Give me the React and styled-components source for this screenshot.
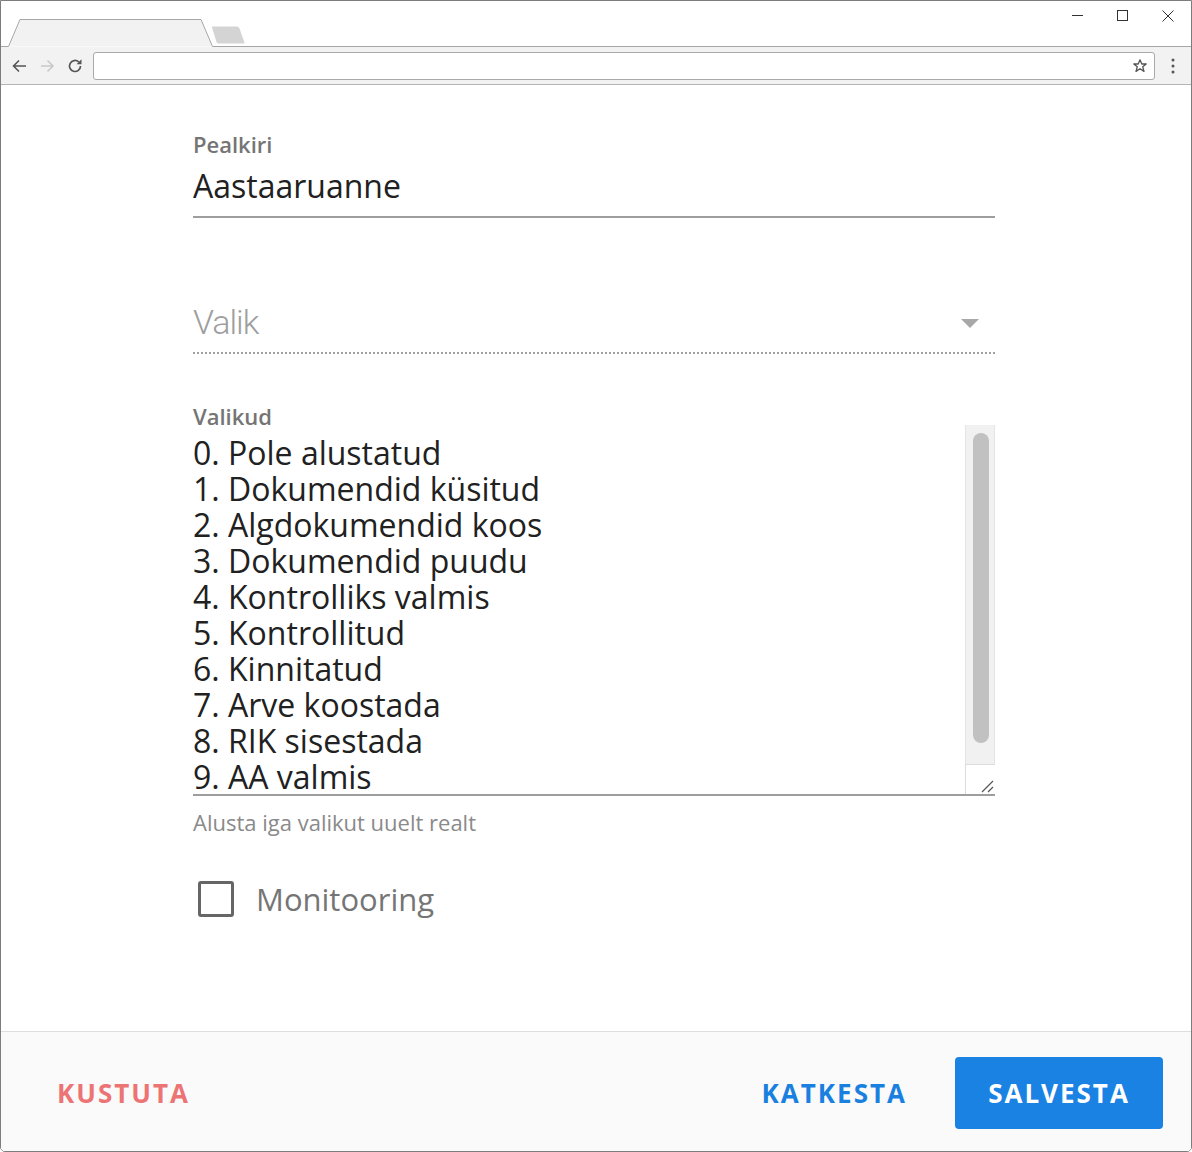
import styled, { createGlobalStyle } from 'styled-components';

const GlobalStyle = createGlobalStyle`
  html, body {
    margin: 0;
    padding: 0;
    background: #ffffff;
  }
  * {
    box-sizing: border-box;
  }
`;

const choices = [
  '0. Pole alustatud',
  '1. Dokumendid küsitud',
  '2. Algdokumendid koos',
  '3. Dokumendid puudu',
  '4. Kontrolliks valmis',
  '5. Kontrollitud',
  '6. Kinnitatud',
  '7. Arve koostada',
  '8. RIK sisestada',
  '9. AA valmis',
];

// browser chrome (tabs + toolbar)
const TabStrip = () => (
  <svg width="250" height="46" viewBox="0 0 250 46">
    <path d="M0 45.5H7.5L19 18.5H200L211.5 45.5H250" fill="#f2f2f2" stroke="#a6a6a6" strokeWidth="1" />
    <rect x="0" y="46" width="250" height="1" fill="#f2f2f2" />
    <path d="M211 26.5Q210 25.5 212 25.5H236Q237.5 25.5 238.3 27L243.5 41.5Q244 42.5 242.5 42.5H217.5Q216 42.5 215.5 41Z" fill="#d4d4d4" />
  </svg>
);

const WindowButtons = () => (
  <svg width="130" height="30" viewBox="0 0 130 30">
    <path d="M12 14.5H23" stroke="#333" strokeWidth="1" />
    <rect x="57.5" y="9.5" width="10" height="10" fill="none" stroke="#333" strokeWidth="1" />
    <path d="M102.5 9.5L113.5 20.5M113.5 9.5L102.5 20.5" stroke="#333" strokeWidth="1" />
  </svg>
);

const NavIcons = () => (
  <svg width="84" height="20" viewBox="0 0 84 20">
    <path d="M25 10H13M18 4.5L12.5 10L18 15.5" fill="none" stroke="#555" strokeWidth="1.6" />
    <path d="M40 10H52M46.5 4.5L52 10L46.5 15.5" fill="none" stroke="#c9c9c9" strokeWidth="1.6" />
    <path d="M79.5 10A5.5 5.5 0 1 1 77.8 6" fill="none" stroke="#555" strokeWidth="1.7" />
    <path d="M80.5 3.2V8.2H75.5Z" fill="#555" />
  </svg>
);

const StarIcon = () => (
  <svg width="16" height="16" viewBox="0 0 16 16">
    <path
      d="M8 1.8L9.8 6H14.2L10.7 8.8L12 13.4L8 10.7L4 13.4L5.3 8.8L1.8 6H6.2Z"
      fill="none"
      stroke="#555"
      strokeWidth="1.3"
      strokeLinejoin="round"
    />
  </svg>
);

const MenuDots = () => (
  <svg width="6" height="18" viewBox="0 0 6 18">
    <circle cx="3" cy="3" r="1.5" fill="#555" />
    <circle cx="3" cy="9" r="1.5" fill="#555" />
    <circle cx="3" cy="15" r="1.5" fill="#555" />
  </svg>
);

const ResizeGrip = () => (
  <svg width="14" height="14" viewBox="0 0 14 14">
    <path d="M13 2L2 13M13 8L8 13" stroke="#555" strokeWidth="1.2" />
  </svg>
);

const App = () => {
  return (
    <>
      <GlobalStyle />
      <Window>
        <TitleBar>
          <TabStrip />
          <TitleFill>
            <WindowButtons />
          </TitleFill>
        </TitleBar>
        <Toolbar>
          <NavIcons />
          <Omnibox>
            <StarIcon />
          </Omnibox>
          <MenuButton>
            <MenuDots />
          </MenuButton>
        </Toolbar>

        <Page>
          <Form>
            <Label>Pealkiri</Label>
            <TextInput type="text" value="Aastaaruanne" readOnly />

            <SelectField>
              <Placeholder>Valik</Placeholder>
              <Caret />
            </SelectField>

            <Label $tight>Valikud</Label>
            <TextareaBox>
              <Textarea value={choices.join('\n')} readOnly />
              <ScrollColumn>
                <ScrollTrack>
                  <ScrollThumb />
                </ScrollTrack>
                <Resizer>
                  <ResizeGrip />
                </Resizer>
              </ScrollColumn>
            </TextareaBox>
            <Hint>Alusta iga valikut uuelt realt</Hint>

            <CheckRow>
              <CheckBox />
              <CheckLabel>Monitooring</CheckLabel>
            </CheckRow>
          </Form>
        </Page>

        <Footer>
          <TextButton $color="#ec7474">KUSTUTA</TextButton>
          <FooterRight>
            <TextButton $color="#1a80e0">KATKESTA</TextButton>
            <PrimaryButton>SALVESTA</PrimaryButton>
          </FooterRight>
        </Footer>
      </Window>
    </>
  );
};

export default App;

const Window = styled.div`
  width: 1192px;
  height: 1152px;
  border: 1px solid #7d7d7d;
  border-radius: 0 0 5px 5px;
  overflow: hidden;
  display: flex;
  flex-direction: column;
  background: #ffffff;
  font-family: 'Open Sans', 'Noto Sans', sans-serif;
`;

const TitleBar = styled.div`
  height: 46px;
  display: flex;
  background: #ffffff;

  svg {
    display: block;
    flex-shrink: 0;
  }
`;

const TitleFill = styled.div`
  flex: 1;
  display: flex;
  justify-content: flex-end;
  align-items: flex-start;
  border-bottom: 1px solid #a6a6a6;
  padding-right: 1px;
`;

const Toolbar = styled.div`
  height: 38px;
  display: flex;
  align-items: center;
  background: #f2f2f2;
  border-bottom: 1px solid #b4b4b4;

  & > svg {
    flex-shrink: 0;
    margin-right: 8px;
  }
`;

const Omnibox = styled.div`
  flex: 1;
  height: 28px;
  background: #ffffff;
  border: 1px solid #a9a9a9;
  border-radius: 3px;
  display: flex;
  align-items: center;
  justify-content: flex-end;
  padding-right: 6px;

  svg {
    display: block;
  }
`;

const MenuButton = styled.div`
  width: 36px;
  display: flex;
  justify-content: center;

  svg {
    display: block;
  }
`;

const Page = styled.main`
  flex: 1;
  background: #ffffff;
`;

const Form = styled.div`
  width: 802px;
  margin-left: 192px;
  padding-top: 45px;
  display: flex;
  flex-direction: column;
`;

const Label = styled.div`
  font-size: 22px;
  font-weight: 600;
  line-height: ${(props) => (props.$tight ? '22px' : '28px')};
  color: #757575;
  margin-top: ${(props) => (props.$tight ? '51px' : '0')};
`;

const TextInput = styled.input`
  margin-top: 8px;
  height: 52px;
  width: 100%;
  border: none;
  border-bottom: 2px solid #9e9e9e;
  padding: 0 0 11px;
  background: transparent;
  font-family: 'Open Sans', 'Noto Sans', sans-serif;
  font-size: 32px;
  line-height: 40px;
  color: #212121;
  outline: none;
`;

const SelectField = styled.div`
  margin-top: 82px;
  height: 54px;
  display: flex;
  align-items: center;
  justify-content: space-between;
  padding: 0 16px 8px 0;
  border-bottom: 2px dotted #a0a0a0;
`;

const Placeholder = styled.span`
  font-family: Roboto, 'Noto Sans', sans-serif;
  font-weight: 300;
  font-size: 34px;
  letter-spacing: -1px;
  line-height: 44px;
  color: #9e9e9e;
`;

const Caret = styled.span`
  width: 0;
  height: 0;
  border-left: 9px solid transparent;
  border-right: 9px solid transparent;
  border-top: 9px solid #a8a8a8;
  margin-top: 2px;
`;

const TextareaBox = styled.div`
  height: 369px;
  display: flex;
  border-bottom: 2px solid #9e9e9e;
`;

const Textarea = styled.textarea`
  flex: 1;
  height: 100%;
  border: none;
  outline: none;
  resize: none;
  overflow: hidden;
  padding: 8px 0 0;
  margin: 0;
  background: transparent;
  font-family: 'Open Sans', 'Noto Sans', sans-serif;
  font-size: 32px;
  line-height: 36px;
  color: #212121;
`;

const ScrollColumn = styled.div`
  width: 30px;
  margin-top: -2px;
  display: flex;
  flex-direction: column;
`;

const ScrollTrack = styled.div`
  flex: 1;
  background: #f1f1f1;
  border-left: 1px solid #e4e4e4;
  border-right: 1px solid #e4e4e4;
  padding: 8px 0 0 7px;
`;

const ScrollThumb = styled.div`
  width: 16px;
  height: 310px;
  border-radius: 8px;
  background: #c1c1c1;
`;

const Resizer = styled.div`
  height: 30px;
  background: #ffffff;
  border-left: 1px solid #dcdcdc;
  border-top: 1px solid #dcdcdc;
  display: flex;
  justify-content: flex-end;
  align-items: flex-end;
  padding: 0 1px 1px 0;

  svg {
    display: block;
  }
`;

const Hint = styled.div`
  margin-top: 12px;
  font-size: 22px;
  line-height: 28px;
  color: #8a8a8a;
`;

const CheckRow = styled.label`
  margin-top: 41px;
  height: 44px;
  display: flex;
  align-items: center;
  padding-left: 5px;
`;

const CheckBox = styled.span`
  width: 36px;
  height: 36px;
  border: 3px solid #666666;
  border-radius: 3px;
  flex-shrink: 0;
`;

const CheckLabel = styled.span`
  margin-left: 22px;
  font-size: 31px;
  line-height: 42px;
  color: #757575;
`;

const Footer = styled.footer`
  height: 120px;
  background: #fafafa;
  border-top: 1px solid #dedede;
  display: flex;
  align-items: center;
  justify-content: space-between;
  padding: 2px 28px 0 56px;
`;

const FooterRight = styled.div`
  display: flex;
  align-items: center;
  gap: 48px;
`;

const TextButton = styled.button`
  border: none;
  background: transparent;
  padding: 0;
  font-family: 'Open Sans', 'Noto Sans', sans-serif;
  font-size: 26px;
  font-weight: 700;
  letter-spacing: 2px;
  line-height: 36px;
  color: ${(props) => props.$color};
  cursor: pointer;
`;

const PrimaryButton = styled.button`
  width: 208px;
  height: 72px;
  border: none;
  border-radius: 4px;
  background: #1a82e3;
  color: #ffffff;
  font-family: 'Open Sans', 'Noto Sans', sans-serif;
  font-size: 26px;
  font-weight: 700;
  letter-spacing: 2px;
  cursor: pointer;
`;
